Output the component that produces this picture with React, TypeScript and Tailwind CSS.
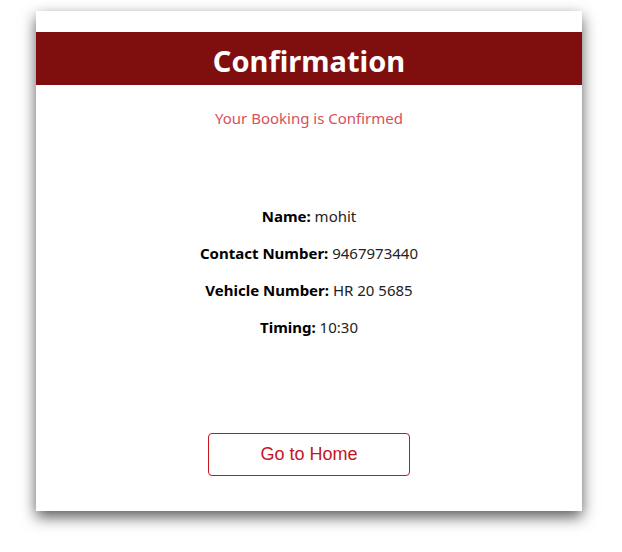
export default function App() {
  return (
    <div className="min-h-screen bg-white pt-[11px] pl-[36px]">
      <div
        className="w-[546px] h-[500px] bg-white flex flex-col items-center shadow-[0_6px_14px_rgba(0,0,0,0.65)]"
        style={{ fontFamily: '"Segoe UI", "Noto Sans", sans-serif' }}
      >
        <div className="mt-[21px] w-full h-[53px] bg-[#7f0f0f] flex items-center justify-center">
          <h1 className="text-white text-[29px] font-bold leading-none pt-[3px]">Confirmation</h1>
        </div>
        <p className="mt-[23px] text-[15px] leading-[20px] text-[#d8505a]">Your Booking is Confirmed</p>

        <div className="mt-[78px] flex flex-col items-center gap-[17px] text-[15px] leading-[20px] text-[#222]">
          <p>
            <span className="font-bold text-black">Name:</span> mohit
          </p>
          <p>
            <span className="font-bold text-black">Contact Number:</span> 9467973440
          </p>
          <p>
            <span className="font-bold text-black">Vehicle Number:</span> HR 20 5685
          </p>
          <p>
            <span className="font-bold text-black">Timing:</span> 10:30
          </p>
        </div>

        <button
          className="mt-[96px] w-[202px] h-[43px] border border-[#c4161c] rounded-[4px] text-[#c4161c] text-[18px] bg-white"
          style={{ fontFamily: '"Liberation Sans", Arial, sans-serif' }}
        >
          Go to Home
        </button>
      </div>
    </div>
  );
}
